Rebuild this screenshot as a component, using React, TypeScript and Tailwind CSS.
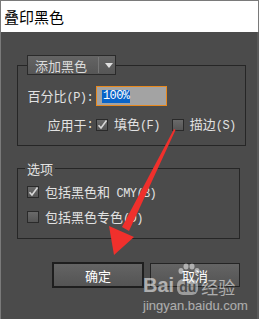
import React from "react"

const cjk = { fontFamily: '"Noto Sans CJK SC", "Noto Sans", sans-serif' }

function A({ children }: { children: React.ReactNode }) {
  return (
    <span className="text-[12px] tracking-[-0.6px]" style={{ fontFamily: '"Liberation Mono", "DejaVu Sans Mono", monospace' }}>
      {children}
    </span>
  )
}

function Check({ checked }: { checked?: boolean }) {
  return (
    <span className="relative inline-block w-[12px] h-[12px] border border-[#2a2a2a] bg-gradient-to-b from-[#6a6a6a] to-[#555555] shrink-0">
      {checked && (
        <svg viewBox="0 0 12 12" className="absolute -left-px -top-px w-[12px] h-[12px]">
          <path d="M2.5 6.2 L5 9 L10.5 1.5" fill="none" stroke="#d8d8d8" strokeWidth="1.6" />
        </svg>
      )}
    </span>
  )
}

export default function App() {
  return (
    <div
      className="relative w-[259px] h-[319px] overflow-hidden bg-[#4b4b4b] border-l border-t border-[#7a7a7a] text-[13px] text-[#e2e2e2] leading-none whitespace-nowrap"
      style={cjk}
    >
      {/* Title */}
      <div className="h-[31px] bg-white border-r border-[#7a7a7a] flex items-center pl-[3px] text-[15px] text-black">
        叠印黑色
      </div>

      <div className="flex flex-col pl-[16px] pr-[17px] border-r-2 border-[#5a5a5a] h-[287px]">
        {/* Group 1 */}
        <fieldset className="mt-[23px] border border-[#262626] px-[9px] pt-[11px] pb-[12px]">
          <legend className="h-[20px] w-[89px] flex items-center border border-[#2a2a2a] bg-gradient-to-b from-[#646464] to-[#565656] text-[#dcdcdc]">
            <span className="pl-[7px] w-[70px]">添加黑色</span>
            <span className="w-px h-[16px] bg-[#3a3a3a] border-r border-[#777]" />
            <svg viewBox="0 0 8 5" className="ml-[6px] w-[8px] h-[5px]">
              <path d="M0 0 H8 L4 5 Z" fill="#e0e0e0" />
            </svg>
          </legend>
          <div className="grid grid-cols-[66px_auto] gap-x-[3px] items-center">
            <span className="text-right">百分比<A>(P):</A></span>
            <div className="w-[71px] h-[20px] border border-[#e8891e] bg-[#a3a3a3] flex items-center pl-[5px]">
              <span className="bg-[#0a64c8] text-white px-px h-[13px] flex items-center">
                <A>100%</A>
              </span>
            </div>
            <span className="text-right mt-[10px] h-[17px] flex items-center justify-end">
              应用于<A>:</A>
            </span>
            <div className="mt-[10px] h-[17px] flex items-center">
              <Check checked />
              <span className="ml-[6px]">填色<A>(F)</A></span>
              <span className="ml-[12px] flex"><Check /></span>
              <span className="ml-[6px]">描边<A>(S)</A></span>
            </div>
          </div>
        </fieldset>

        {/* Group 2 */}
        <fieldset className="mt-[14px] border border-[#262626] px-[9px] pt-[8px] pb-[13px]">
          <legend className="h-[16px] -ml-[2px] px-[2px] flex items-center">选项</legend>
          <div className="h-[16px] flex items-center">
            <Check checked />
            <span className="ml-[6px]">包括黑色和<A> CMY(B)</A></span>
          </div>
          <div className="mt-[9px] h-[16px] flex items-center">
            <Check />
            <span className="ml-[6px]">包括黑色专色<A>(D)</A></span>
          </div>
        </fieldset>

        {/* Buttons */}
        <div className="mt-[23px] flex justify-end items-center gap-[6px] text-white">
          <button className="w-[92px] h-[26px] border-2 border-[#1e1e1e] bg-gradient-to-b from-[#646464] to-[#545454] flex items-center justify-center">
            确定
          </button>
          <button className="w-[90px] h-[24px] border border-[#242424] bg-gradient-to-b from-[#646464] to-[#545454] flex items-center justify-center">
            取消
          </button>
        </div>
      </div>

      {/* Red annotation arrow */}
      <svg className="absolute left-0 top-0 pointer-events-none" width="259" height="319">
        <polygon points="173,128 174.5,129 128,230 121,226" fill="#f0302c" />
        <polygon points="113,254 108,225 133,236" fill="#f0302c" />
      </svg>

      {/* Watermark */}
      <div className="absolute left-[142px] top-[262px] pointer-events-none text-white/55" style={{ fontFamily: '"Liberation Sans", Arial, sans-serif' }}>
        <svg className="absolute left-[34px] top-[0px]" width="24" height="14" viewBox="0 0 24 14">
          <g fill="rgba(255,255,255,0.5)">
            <ellipse cx="4" cy="8" rx="2.5" ry="3" />
            <ellipse cx="9" cy="3.5" rx="2.5" ry="3" />
            <ellipse cx="15" cy="3.5" rx="2.5" ry="3" />
            <ellipse cx="20" cy="8" rx="2.5" ry="3" />
          </g>
        </svg>
        <div className="mt-[12px] flex items-end gap-[3px] text-[20px] font-bold leading-none">
          <span>Bai</span>
          <span className="text-[14px] bg-white/45 text-[#4b4b4b] rounded-[6px] px-[2px] leading-[16px]">du</span>
          <span className="text-[17px] font-normal" style={cjk}>经验</span>
        </div>
        <div className="mt-[4px] text-[13px] leading-none">jingyan.baidu.com</div>
      </div>
    </div>
  )
}
